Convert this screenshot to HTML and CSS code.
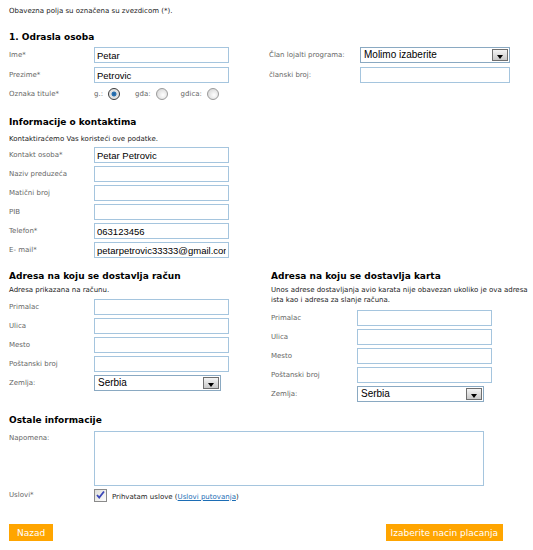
FILE: index.html
```html
<!DOCTYPE html>
<html lang="sr">
<head>
  <meta charset="UTF-8" />
  <title>Podaci o putniku</title>
  <link rel="stylesheet" href="styles.css">
</head>
<body>

<p class="note">Obavezna polja su označena su zvezdicom (*).</p>

<!-- 1. Odrasla osoba -->
<h2 class="naslov prvi">1. Odrasla osoba</h2>
<div class="kolone">
  <div class="levo polja p20">
    <div class="red"><label>Ime*</label><input class="polje" type="text" value="Petar"></div>
    <div class="red"><label>Prezime*</label><input class="polje" type="text" value="Petrovic"></div>
    <div class="red titula">
      <label>Oznaka titule*</label>
      <div class="radios">
        <span class="opcija">g.:</span><span class="radio checked"></span>
        <span class="opcija">gđa:</span><span class="radio"></span>
        <span class="opcija">gđica:</span><span class="radio"></span>
      </div>
    </div>
  </div>
  <div class="desno polja p20">
    <div class="red"><label class="siri">Član lojalti programa:</label>
      <div class="izbor dugacak">Molimo izaberite<span class="strelica"><svg width="6" height="4" viewBox="0 0 6 4"><path d="M0 0h6L3 4z" fill="#000"/></svg></span></div>
    </div>
    <div class="red"><label class="siri">članski broj:</label><input class="polje dugacak" type="text"></div>
  </div>
</div>

<!-- Kontakt -->
<h2 class="naslov kontakt">Informacije o kontaktima</h2>
<p class="opis">Kontaktiraćemo Vas koristeći ove podatke.</p>
<div class="polja p19">
  <div class="red"><label>Kontakt osoba*</label><input class="polje" type="text" value="Petar Petrovic"></div>
  <div class="red"><label>Naziv preduzeća</label><input class="polje" type="text"></div>
  <div class="red"><label>Matični broj</label><input class="polje" type="text"></div>
  <div class="red"><label>PIB</label><input class="polje" type="text"></div>
  <div class="red"><label>Telefon*</label><input class="polje" type="text" value="063123456"></div>
  <div class="red"><label>E- mail*</label><input class="polje" type="text" value="petarpetrovic33333@gmail.com"></div>
</div>

<!-- Adrese -->
<div class="kolone adrese">
  <div class="levo">
    <h2 class="naslov">Adresa na koju se dostavlja račun</h2>
    <p class="opis mali">Adresa prikazana na računu.</p>
    <div class="polja p19">
      <div class="red"><label>Primalac</label><input class="polje" type="text"></div>
      <div class="red"><label>Ulica</label><input class="polje" type="text"></div>
      <div class="red"><label>Mesto</label><input class="polje" type="text"></div>
      <div class="red"><label>Poštanski broj</label><input class="polje" type="text"></div>
      <div class="red"><label>Zemlja:</label>
        <div class="izbor">Serbia<span class="strelica"><svg width="6" height="4" viewBox="0 0 6 4"><path d="M0 0h6L3 4z" fill="#000"/></svg></span></div>
      </div>
    </div>
  </div>
  <div class="desno karta">
    <h2 class="naslov">Adresa na koju se dostavlja karta</h2>
    <p class="opis mali">Unos adrese dostavljanja avio karata nije obavezan ukoliko je ova adresa ista kao i adresa za slanje računa.</p>
    <div class="polja p19">
      <div class="red"><label>Primalac</label><input class="polje" type="text"></div>
      <div class="red"><label>Ulica</label><input class="polje" type="text"></div>
      <div class="red"><label>Mesto</label><input class="polje" type="text"></div>
      <div class="red"><label>Poštanski broj</label><input class="polje" type="text"></div>
      <div class="red"><label>Zemlja:</label>
        <div class="izbor">Serbia<span class="strelica"><svg width="6" height="4" viewBox="0 0 6 4"><path d="M0 0h6L3 4z" fill="#000"/></svg></span></div>
      </div>
    </div>
  </div>
</div>

<!-- Ostalo -->
<h2 class="naslov ostalo">Ostale informacije</h2>
<div class="red napomena"><label>Napomena:</label><textarea></textarea></div>
<div class="red uslovi">
  <label>Uslovi*</label>
  <span class="kvadrat">
    <svg width="13" height="13" viewBox="0 0 13 13">
      <defs><linearGradient id="g" x1="0" y1="0" x2="1" y2="1"><stop offset="0" stop-color="#dcdcd7"/><stop offset="1" stop-color="#ffffff"/></linearGradient></defs>
      <rect x="0.5" y="0.5" width="12" height="12" fill="url(#g)" stroke="#8a8a8a"/>
      <path d="M3 6l2.2 2.6L10 2.5" fill="none" stroke="#3b47b8" stroke-width="1.8"/>
    </svg>
  </span>
  <span class="prihvatam">Prihvatam uslove (<a href="#">Uslovi putovanja</a>)</span>
</div>

<div class="dugmad">
  <button class="dugme nazad">Nazad</button>
  <button class="dugme">Izaberite nacin placanja</button>
</div>

</body>
</html>
```

FILE: styles.css
```css
body {
  margin: 0;
  padding: 0 9px;
  width: 515px;
  background: #fff;
  font-family: "DejaVu Sans", Verdana, sans-serif;
  font-size: 7px;
  color: #333;
}
.note {
  margin: 5px 0 0;
  line-height: 12px;
  color: #222;
}
.naslov {
  margin: 0;
  font-size: 9px;
  line-height: 14px;
  font-weight: bold;
  color: #000;
}
.prvi { margin-top: 13px; margin-bottom: 3px; }
.kontakt { margin-top: 13px; margin-bottom: 4px; }
.ostalo { margin-top: 11px; margin-bottom: 4px; }

.opis {
  margin: 0 0 2px;
  line-height: 12px;
  color: #222;
}
.opis.mali {
  line-height: 10px;
  margin: 2px 0 4px;
}

.kolone {
  display: flex;
}
.levo { width: 260px; }
.desno { flex: 1; }
.adrese { margin-top: 11px; }
.karta { padding-left: 2px; margin-right: -9px; }
.karta .opis.mali { margin-bottom: 5px; }

.polja {
  display: flex;
  flex-direction: column;
}
.p20 { gap: 4px; }
.p19 { gap: 3px; }

.red {
  display: flex;
  align-items: center;
  min-height: 16px;
}
.red label {
  width: 85px;
  flex-shrink: 0;
  color: #666;
}
.desno .red label { width: 86px; }
.desno .red label.siri { width: 91px; }

.polje {
  box-sizing: border-box;
  width: 135px;
  height: 16px;
  margin: 0;
  padding: 0 2px;
  border: 1px solid #a5c5de;
  font-family: "Liberation Sans", Arial, sans-serif;
  font-size: 9.5px;
  color: #000;
  background: #fff;
  outline: none;
}
.dugacak { width: 150px; }

.izbor {
  position: relative;
  box-sizing: border-box;
  width: 127px;
  height: 16px;
  padding: 0 0 0 3px;
  border: 1px solid #8aa9c2;
  font-family: "Liberation Sans", Arial, sans-serif;
  font-size: 10px;
  line-height: 14px;
  color: #000;
}
.izbor.dugacak { width: 150px; }
.strelica {
  position: absolute;
  top: 1px;
  right: 1px;
  box-sizing: border-box;
  width: 16px;
  height: 12px;
  border: 1px solid #6f6f6f;
  background: linear-gradient(#f4f4f4, #c9c9c9);
  display: flex;
  justify-content: center;
  align-items: flex-end;
  padding-bottom: 1px;
}

.titula { margin-top: -1px; }
.radios {
  display: flex;
  align-items: center;
  color: #666;
}
.opcija { margin-right: 5px; }
.radio {
  box-sizing: border-box;
  width: 12px;
  height: 12px;
  border-radius: 50%;
  border: 1px solid #9a9a9a;
  background: radial-gradient(circle at 60% 60%, #ffffff 0, #e2e2e2 60%, #cfcfcf 100%);
  margin-right: 13px;
}
.radio.checked {
  border-color: #3a3a3a;
  background: radial-gradient(circle at 50% 50%, #1f5d99 0, #2f78b8 30%, #dcdcdc 40%, #f2f2f2 100%);
  margin-right: 15px;
}

.napomena { align-items: flex-start; }
.napomena label { padding-top: 3px; }
textarea {
  box-sizing: border-box;
  width: 390px;
  height: 55px;
  margin: 0;
  border: 1px solid #a5c5de;
  resize: none;
  outline: none;
}
.uslovi { margin-top: 1px; }
.kvadrat { display: flex; }
.prihvatam {
  margin-left: 5px;
  padding-top: 3px;
  color: #222;
}
.prihvatam a { color: #1c6db5; }

.dugmad {
  display: flex;
  justify-content: space-between;
  margin-top: 21px;
  width: 494px;
}
.dugme {
  height: 17px;
  padding: 0 5px;
  border: none;
  background: #ffa500;
  color: #fff;
  font-family: "DejaVu Sans", Verdana, sans-serif;
  font-size: 9px;
  cursor: pointer;
}
.nazad { padding: 0 8px; }
```
